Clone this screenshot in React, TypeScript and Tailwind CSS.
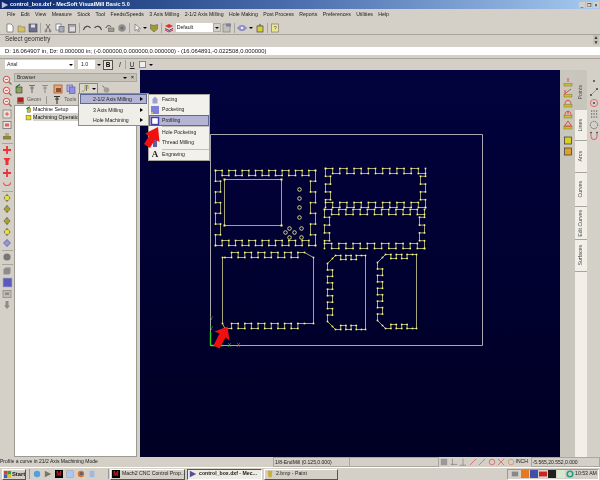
import React from 'react'

type Pt = [number, number]

// walk one side of a panel as a square wave, alternating between the edge and the inset line
function side(a: Pt, b: Pt, n: number, depth: number, inset: Pt): Pt[] {
    const out: Pt[] = []
    for (let i = 0; i < n; i++) {
        const off = i % 2 === 1 ? depth : 0
        const t0 = i / n
        const t1 = (i + 1) / n
        out.push([a[0] + (b[0] - a[0]) * t0 + inset[0] * off, a[1] + (b[1] - a[1]) * t0 + inset[1] * off])
        out.push([a[0] + (b[0] - a[0]) * t1 + inset[0] * off, a[1] + (b[1] - a[1]) * t1 + inset[1] * off])
    }
    return out
}

function panel(x1: number, y1: number, x2: number, y2: number, nx: number, ny: number, depth = 5): Pt[] {
    return [
        ...side([x1, y1], [x2, y1], nx, depth, [0, 1]),
        ...side([x2, y1], [x2, y2], ny, depth, [-1, 0]),
        ...side([x2, y2], [x1, y2], nx, depth, [0, -1]),
        ...side([x1, y2], [x1, y1], ny, depth, [1, 0]),
    ]
}

// panels with straight sides and teeth only along part of the top and bottom
function toothed(x1: number, y1: number, x2: number, y2: number, tx1: number, tx2: number, n: number): Pt[] {
    return [
        [x1, y1],
        ...side([tx1, y1], [tx2, y1], n, -5, [0, 1]),
        [x2, y1],
        [x2, y2],
        ...side([tx2, y2], [tx1, y2], n, -5, [0, -1]),
        [x1, y2],
    ]
}

function sideTeeth(x1: number, y1: number, x2: number, y2: number, n: number): Pt[] {
    return [
        [x2, y1],
        [x2, y2],
        ...side([x2 - 4, y2], [x1 + 8, y2], 5, 4, [0, -1]),
        [x1 + 5, y2 - 3],
        ...side([x1, y2 - 8], [x1, y1 + 8], n, 5, [1, 0]),
        [x1 + 5, y1 + 3],
        ...side([x1 + 8, y1], [x2 - 4, y1], 5, 4, [0, 1]),
    ]
}

const Outline: React.FC<{ pts: Pt[] }> = ({ pts }) => (
    <g>
        <polygon points={pts.map((p) => p.join(',')).join(' ')} fill="none" stroke="#a6a678" strokeWidth="1" />
        {pts.map((p, i) => (
            <rect key={i} x={p[0] - 0.8} y={p[1] - 0.8} width="1.6" height="1.6" fill="#ffff70" />
        ))}
    </g>
)

const Drawing = () => (
    <svg width="420" height="387" viewBox="139.5 69.5 420 387" className="block">
        <polyline points="210,134 482,134 482,345 210,345 210,134" fill="none" stroke="#a8a8b0" strokeWidth="1" />
        <Outline pts={panel(215, 170, 315, 245, 15, 7)} />
        <rect x="224" y="179" width="57" height="46" fill="none" stroke="#a6a678" strokeWidth="1" />
        {[[224, 179], [281, 179], [224, 225], [281, 225]].map((p, i) => (
            <rect key={i} x={p[0] - 1} y={p[1] - 1} width="2" height="2" fill="#ffff70" />
        ))}
        {[[299, 189], [299, 198], [299, 207], [299, 217], [301, 228], [301, 237], [289, 228], [285, 232], [294, 232], [289, 237]].map((p, i) => (
            <circle key={i} cx={p[0]} cy={p[1]} r="1.8" fill="none" stroke="#e8e890" strokeWidth="0.9" />
        ))}
        <Outline pts={panel(325, 168, 425, 207, 14, 5)} />
        <Outline pts={panel(324, 209, 424, 248, 14, 5)} />
        <Outline pts={toothed(222, 257, 313, 323, 224.4, 304, 12)} />
        <Outline pts={sideTeeth(327, 255, 365, 329, 9)} />
        <Outline pts={sideTeeth(377, 254, 416, 328, 9)} />
        <line x1="210" y1="331" x2="210" y2="345" stroke="#30d020" strokeWidth="1.4" />
        <line x1="210" y1="345" x2="223" y2="345" stroke="#60e020" strokeWidth="1.4" />
        <text x="209" y="329" fontSize="6" fontFamily="Liberation Sans" fill="#30b020">Y</text>
        <text x="209" y="319" fontSize="6" fontFamily="Liberation Sans" fill="#807820">Y</text>
        <text x="227" y="346" fontSize="6" fontFamily="Liberation Sans" fill="#30b020">X</text>
        <text x="236" y="346" fontSize="6" fontFamily="Liberation Sans" fill="#807820">X</text>
        <polygon points="227,326 229,340 225,337 219,348 213,345 219,333 214,331" fill="#f01010" />
    </svg>
)

const Ic: React.FC<{ children: React.ReactNode; s?: number }> = ({ children, s = 10 }) => (
    <svg width={s} height={s} viewBox="0 0 10 10" className="block shrink-0">
        {children}
    </svg>
)

const Sep = () => <div className="w-px h-[10px] bg-[#a8a59c] shrink-0 mx-[0.5px]" />
const HSep = () => <div className="h-px w-[11px] bg-[#a8a59c] my-[0.85px] mx-auto" />
const Down = () => <div className="w-0 h-0 border-x-[2px] border-x-transparent border-t-[2.5px] border-t-black shrink-0" />

const Slot: React.FC<{ children: React.ReactNode }> = ({ children }) => (
    <div className="h-[11.3px] flex items-center justify-center shrink-0">{children}</div>
)

const Mag = ({ c = '#e03030' }: { c?: string }) => (
    <Ic>
        <circle cx="4.5" cy="4.5" r="3.2" fill="#f0e8e0" stroke={c} strokeWidth="0.9" />
        <line x1="7" y1="7" x2="9.5" y2="9.5" stroke="#707070" strokeWidth="1.2" />
        <line x1="3" y1="4.5" x2="6" y2="4.5" stroke={c} strokeWidth="0.7" />
    </Ic>
)
const Bead = ({ c }: { c: string }) => (
    <Ic>
        <polygon points="5,0.8 8.5,5 5,9.2 1.5,5" fill="#77775c" />
        <circle cx="5" cy="5" r="2.3" fill={c} />
    </Ic>
)
const RedCross = () => (
    <Ic>
        <path d="M5 1v8M1 5h8" stroke="#f03038" strokeWidth="1.8" />
    </Ic>
)

const LeftColumn = () => (
    <div className="w-[14px] shrink-0 pt-[4px] flex flex-col">
        <Slot><Mag /></Slot>
        <Slot><Mag /></Slot>
        <Slot><Mag /></Slot>
        <Slot>
            <Ic><rect x="1" y="1" width="8" height="8" fill="#ece4dc" stroke="#808080" strokeWidth="0.8" /><path d="M5 3v4M3 5h4" stroke="#e03030" strokeWidth="0.8" /></Ic>
        </Slot>
        <Slot>
            <Ic><rect x="1" y="1.5" width="8" height="7" fill="#ece4dc" stroke="#707070" strokeWidth="0.8" /><rect x="3" y="3.5" width="4" height="3" fill="#e06060" /></Ic>
        </Slot>
        <Slot>
            <Ic><rect x="1" y="5" width="8" height="3.5" fill="#8a8440" /><rect x="3" y="2" width="4" height="3" fill="#b0aa80" /></Ic>
        </Slot>
        <HSep />
        <Slot><RedCross /></Slot>
        <Slot>
            <Ic><path d="M1.5 2h7l-2 3v4h-3V5z" fill="#f03038" /></Ic>
        </Slot>
        <Slot><RedCross /></Slot>
        <Slot>
            <Ic><path d="M1.5 3.5c0 4 7 4 7 0" fill="none" stroke="#f05050" strokeWidth="1.2" /></Ic>
        </Slot>
        <HSep />
        <Slot><Bead c="#e8e030" /></Slot>
        <Slot><Bead c="#a8a030" /></Slot>
        <Slot><Bead c="#a8a030" /></Slot>
        <Slot><Bead c="#e8e030" /></Slot>
        <Slot>
            <Ic><polygon points="5,0.8 9,5 5,9.2 1,5" fill="#8080d0" /><circle cx="5" cy="5" r="1.8" fill="#a0a0a8" /></Ic>
        </Slot>
        <HSep />
        <Slot>
            <Ic><circle cx="5" cy="5" r="3.6" fill="#777" /></Ic>
        </Slot>
        <HSep />
        <Slot>
            <Ic><path d="M1.5 3.5L3.5 1.5H8.5V7L7 8.5H1.5z" fill="#8c8c88" /></Ic>
        </Slot>
        <Slot>
            <Ic s={11}><rect x="1" y="1" width="8" height="8" fill="#5a5ab8" stroke="#9090c8" strokeWidth="0.5" /></Ic>
        </Slot>
        <Slot>
            <Ic><rect x="1" y="1.5" width="8" height="7" fill="#c0bdb4" stroke="#8c8c88" strokeWidth="0.8" /><rect x="3" y="3.5" width="4" height="2.5" fill="#8c8c88" /></Ic>
        </Slot>
        <Slot>
            <Ic><path d="M3.5 1h3v4.5H8L5 9 2 5.5h1.5z" fill="#8c8c88" /></Ic>
        </Slot>
    </div>
)

const Tool = ({ c = '#707070' }: { c?: string }) => (
    <Ic>
        <path d="M2 1.5h6M3 4h4M5 1.5V9" stroke={c} strokeWidth="1.1" fill="none" />
    </Ic>
)

const Browser = () => (
    <div className="w-[123px] shrink-0 flex flex-col pt-[3px]">
        <div className="h-[7px] bg-[#c6c3ba] text-[5px] leading-[7px] pl-[2px] flex justify-between pr-[2px] text-[#222] border border-[#aaa79e] box-content">
            <span>Browser</span>
            <span className="flex gap-[4px] items-center">
                <Down />
                <span className="font-bold leading-none">×</span>
            </span>
        </div>
        <div className="h-[13px] flex items-center gap-[3px]">
            <Ic>
                <rect x="2" y="3" width="6" height="6" fill="#90a060" stroke="#333" strokeWidth="0.6" />
                <path d="M2 3L6 0.5" stroke="#108020" strokeWidth="1.4" />
            </Ic>
            <Tool />
            <Tool c="#909090" />
            <Ic><rect x="1" y="1" width="8" height="8" fill="#d8b070" stroke="#b04030" strokeWidth="0.7" /><rect x="3" y="4" width="5" height="4" fill="#905030" /></Ic>
            <Ic><rect x="1" y="1" width="5.5" height="6.5" fill="#b0b0e8" stroke="#6060b0" strokeWidth="0.7" /><rect x="3.5" y="3" width="5.5" height="6.5" fill="#9090e0" stroke="#6060b0" strokeWidth="0.7" /></Ic>
            <div className="w-[19px] h-[12px] bg-[#dad7cf] border border-[#888] border-b-0 flex items-center gap-[1px] px-[1px] shrink-0">
                <Ic>
                    <path d="M0.5 7c2 1 3.5 0 3.5-2V1.5h3V5" fill="none" stroke="#a0a020" strokeWidth="0.9" />
                    <path d="M5.5 1v6" stroke="#777" strokeWidth="1" />
                </Ic>
                <Down />
            </div>
            <Ic><path d="M1.5 1.5l2 2.5" stroke="#777" strokeWidth="1" /><circle cx="5.5" cy="6" r="2.8" fill="#a0a09a" /></Ic>
        </div>
        <div className="h-[10px] flex items-center text-[5.2px] text-[#555] pl-[2px] gap-[2px]">
            <Ic s={9}><rect x="1.5" y="1.5" width="7" height="7" fill="#b02020" /><rect x="1.5" y="6.5" width="7" height="2" fill="#a08060" /></Ic>
            <span>Geom</span>
            <div className="w-px h-[8px] bg-[#999] mx-[3px]" />
            <Tool c="#333" />
            <span>Tools</span>
            <div className="ml-[3px]">
                <Ic><rect x="1" y="3" width="8" height="6" fill="#d0c030" stroke="#665" strokeWidth="0.6" /></Ic>
            </div>
        </div>
        <div className="flex-1 min-h-0 bg-white border border-[#9d9a90] relative pl-[10px] text-[5.3px] leading-[8px] text-[#111]">
            <div className="flex items-center gap-[1px] h-[8px] -mt-[1px]">
                <Ic s={7}><rect x="3" y="3" width="5" height="6" fill="#c8c030" stroke="#443" strokeWidth="0.5" /><path d="M2 4L7 1" stroke="#108020" strokeWidth="1.6" /></Ic>
                <span>Machine Setup</span>
            </div>
            <div className="flex items-center gap-[1px] h-[8px]">
                <Ic s={7}><rect x="1.5" y="2" width="7" height="6.5" fill="#e4dc20" stroke="#443" strokeWidth="0.6" /></Ic>
                <span className="bg-[#d6d4cc] whitespace-nowrap">Machining Operations</span>
            </div>
        </div>
    </div>
)

const Row: React.FC<{ active?: boolean; arrow?: boolean; children: React.ReactNode }> = ({ active, arrow, children }) => (
    <div className={active ? 'h-[10px] mx-px flex items-center justify-between bg-[#b4b4d4] border border-[#5f6a94] pl-[12px] pr-[3px]' : 'h-[10px] mx-px flex items-center justify-between border border-transparent pl-[12px] pr-[3px]'}>
        <span className="whitespace-nowrap">{children}</span>
        {arrow && <div className="w-0 h-0 border-y-[2.5px] border-y-transparent border-l-[3px] border-l-black" />}
    </div>
)

const Fly: React.FC<{ label: string; active?: boolean; h: string; icon: React.ReactNode }> = ({ label, active, h, icon }) => (
    <div className={`${h} flex items-center ${active ? 'bg-[#b4b4d4] border border-[#5f6a94]' : 'border border-transparent'}`}>
        <div className="w-[10px] flex justify-center">{icon}</div>
        <span className="ml-[2px] whitespace-nowrap">{label}</span>
    </div>
)

const Menus = () => (
    <>
        <div className="absolute left-[78px] top-[23px] w-[71px] h-[33px] bg-[#efeee9] border border-[#8e8c84] text-[5.2px] leading-[8px] text-[#222] flex flex-col gap-[0.5px]">
            <Row active arrow>2-1/2 Axis Milling</Row>
            <Row arrow>3 Axis Milling</Row>
            <Row arrow>Hole Machining</Row>
        </div>
        <div className="absolute left-[148px] top-[24px] w-[62px] h-[67px] bg-[#f2f1ec] border border-[#a8a59c] text-[5.1px] text-[#222] flex flex-col">
            <Fly label="Facing" h="h-[10px]" icon={<Ic><path d="M2.5 8.5V4L5 1.5 7.5 4v4.5z" fill="#a0a0d0" /></Ic>} />
            <Fly label="Pocketing" h="h-[10px]" icon={<Ic><rect x="1" y="1" width="8" height="8" fill="#8080d8" /><circle cx="2" cy="8" r="1" fill="#e8d020" /></Ic>} />
            <Fly label="Profiling" active h="h-[11px]" icon={<Ic><rect x="1.5" y="1.5" width="7" height="7" fill="#fff" stroke="#4040b0" strokeWidth="1.4" /></Ic>} />
            <div className="h-px bg-[#c4c1b8] ml-[13px]" />
            <Fly label="Hole Pocketing" h="h-[11px]" icon={<Ic><path d="M5 2v6" stroke="#888" /></Ic>} />
            <Fly label="Thread Milling" h="h-[10px]" icon={<Ic><path d="M3 1h4v8H3z" fill="#6060a0" /></Ic>} />
            <div className="h-px bg-[#c4c1b8] ml-[13px] mt-[1px]" />
            <Fly label="Engraving" h="h-[10px]" icon={<span className="font-bold font-['Liberation_Serif',serif] text-[9px] text-[#222]">A</span>} />
        </div>
        <svg width="24" height="28" viewBox="0 0 24 28" className="absolute left-[140px] top-[55px]">
            <polygon points="18,2 19.5,17 15,14.5 10,23 4,19 9,11 5,8.5" fill="#f01010" />
        </svg>
    </>
)

const tabs: [string, string][] = [
    ['Lines', 'h-[31px]'],
    ['Arcs', 'h-[32px]'],
    ['Curves', 'h-[34px]'],
    ['Edit Curves', 'h-[33px]'],
    ['Surfaces', 'h-[32px]'],
]

const VText: React.FC<{ children: React.ReactNode }> = ({ children }) => (
    <span className="[writing-mode:vertical-rl] rotate-180 text-[5.2px] leading-none whitespace-nowrap text-[#444]">{children}</span>
)

const PencilIcon = ({ c }: { c: string }) => (
    <Ic>
        <rect x="1" y="6.5" width="8" height="2.5" fill="#c8c030" stroke="#807820" strokeWidth="0.5" />
        <path d={c} stroke="#e83838" strokeWidth="0.9" fill="none" />
    </Ic>
)

const RightPanels = () => (
    <div className="w-[40px] shrink-0 flex">
        <div className="w-[15px] flex flex-col items-center pt-[7px] bg-[#c9c6bd] gap-[0.7px]">
            <PencilIcon c="M5 1v4" />
            <PencilIcon c="M1.5 6L8 1M2 2v4" />
            <PencilIcon c="M2 6c0-5 6-5 6 0" />
            <PencilIcon c="M2 6c0-5 6-5 6 0M5 2.5v3" />
            <PencilIcon c="M5 1L1.5 6h7z" />
            <div className="h-[4px]" />
            <Ic><rect x="1.5" y="2" width="7" height="7" fill="#d8d020" stroke="#333" strokeWidth="0.7" /></Ic>
            <Ic><rect x="1.5" y="2" width="7" height="7" fill="#e0a030" stroke="#333" strokeWidth="0.7" /></Ic>
        </div>
        <div className="w-[12px] flex flex-col bg-[#f1efe7]">
            <div className="h-[40px] pt-[5px] bg-[#c8c5bc] flex items-center justify-center">
                <VText>Points</VText>
            </div>
            {tabs.map(([label, h]) => (
                <div key={label} className={`${h} border-b border-[#a8a59c] flex items-center justify-center`}>
                    <VText>{label}</VText>
                </div>
            ))}
        </div>
        <div className="w-[13px] flex flex-col items-center pt-[6px] gap-[1px]">
            <Ic><circle cx="5" cy="5" r="0.9" fill="#333" /></Ic>
            <Ic><path d="M1.5 8.5L8.5 1.5" stroke="#e86060" strokeWidth="0.8" /><circle cx="2" cy="8" r="0.9" fill="#333" /><circle cx="8" cy="2" r="0.9" fill="#333" /></Ic>
            <Ic><circle cx="5" cy="5" r="3.6" fill="none" stroke="#e06060" strokeWidth="0.9" /><circle cx="5" cy="5" r="0.9" fill="#333" /></Ic>
            <Ic><path d="M2 2h1.2M4.5 2h1.2M7 2h1.2M2 5h1.2M4.5 5h1.2M7 5h1.2M2 8h1.2M4.5 8h1.2M7 8h1.2" stroke="#444" strokeWidth="1.2" /></Ic>
            <Ic><circle cx="5" cy="5" r="3.7" fill="none" stroke="#666" strokeWidth="1" strokeDasharray="1.2 0.8" /></Ic>
            <Ic><path d="M2 1.5v4a3 3 0 0 0 6 0v-4" fill="none" stroke="#d06060" strokeWidth="1" /><circle cx="2" cy="1.5" r="0.8" fill="#333" /><circle cx="8" cy="1.5" r="0.8" fill="#333" /></Ic>
        </div>
    </div>
)

const menu = ['File', 'Edit', 'View', 'Measure', 'Stock', 'Tool', 'Feeds/Speeds', '3 Axis Milling', '2-1/2 Axis Milling', 'Hole Making', 'Post Process', 'Reports', 'Preferences', 'Utilities', 'Help']

const Doc = () => <Ic><path d="M2 1h4l2 2v6H2z" fill="#fff" stroke="#666" strokeWidth="0.7" /></Ic>

const MainToolbar = () => (
    <div className="h-[13px] flex items-center pl-[5px] gap-[1.6px] border-b border-[#a6a39a] box-content">
        <Doc />
        <Ic><path d="M1 3h3l1 1h3v5H1z" fill="#d8c060" stroke="#777" strokeWidth="0.6" /></Ic>
        <Ic><rect x="1" y="1" width="8" height="8" fill="#706e90" stroke="#444" strokeWidth="0.6" /><rect x="3" y="1.5" width="4" height="3" fill="#dde" /></Ic>
        <Sep />
        <Ic><path d="M3 1l4 6M7 1L3 7" stroke="#555" strokeWidth="0.8" /><circle cx="3" cy="8" r="1" fill="none" stroke="#555" strokeWidth="0.7" /><circle cx="7" cy="8" r="1" fill="none" stroke="#555" strokeWidth="0.7" /></Ic>
        <Ic><rect x="1" y="1" width="5" height="6" fill="#fff" stroke="#667" strokeWidth="0.7" /><rect x="4" y="3.5" width="5" height="5.5" fill="#aab" stroke="#667" strokeWidth="0.7" /></Ic>
        <Ic><rect x="1.5" y="1.5" width="7" height="8" fill="#a8a8a8" stroke="#666" strokeWidth="0.7" /><rect x="3" y="4" width="5" height="4" fill="#ddd" /></Ic>
        <Sep />
        <Ic><path d="M1.5 7c1-4 5-5 7-2" fill="none" stroke="#444" strokeWidth="1.1" /></Ic>
        <Ic><path d="M8.5 7c-1-4-5-5-7-2" fill="none" stroke="#444" strokeWidth="1.1" /></Ic>
        <Ic><path d="M1 5c1-3 4-3 5-1" fill="none" stroke="#444" strokeWidth="1" /><rect x="3.5" y="5" width="5.5" height="3.5" fill="#a09c90" stroke="#555" strokeWidth="0.5" /></Ic>
        <Ic><circle cx="5" cy="5" r="3.8" fill="#8f8f8f" /><circle cx="5" cy="5" r="1.6" fill="#6c6c6c" /></Ic>
        <Sep />
        <Ic><path d="M3 1v7l2-1.5 1.5 2.5 1-.6L6 6l2.5-.4z" fill="#eee" stroke="#666" strokeWidth="0.6" /></Ic>
        <Down />
        <Ic><path d="M1.5 1.5l3.5 1 3.5-1V6L5 9 1.5 6z" fill="#a09a30" stroke="#555" strokeWidth="0.5" /></Ic>
        <Sep />
        <Ic><path d="M1 3l4-2 4 2-4 2z" fill="#e03030" /><path d="M1 5.5l4 2 4-2" stroke="#4040a0" fill="none" /><path d="M1 7l4 2 4-2" stroke="#e03030" fill="none" /></Ic>
        <div className="w-[45px] h-[9px] bg-white flex items-center justify-between text-[5.2px] pl-[1px] text-[#222] shrink-0">
            <span>Default</span>
            <div className="w-[8px] h-[9px] bg-[#d4d0c8] flex items-center justify-center border border-[#b0ada4]"><Down /></div>
        </div>
        <Ic><rect x="1" y="1" width="7" height="8" fill="#c0c0b8" stroke="#777" strokeWidth="0.6" /><rect x="4" y="0.5" width="5" height="3" fill="#8080a0" /></Ic>
        <Sep />
        <Ic><path d="M0.5 5C3 1.5 7 1.5 9.5 5 7 8.5 3 8.5 0.5 5z" fill="#9090d8" stroke="#6060a0" strokeWidth="0.5" /><circle cx="5" cy="5" r="1.3" fill="#eee" /></Ic>
        <Down />
        <Ic><rect x="2" y="3" width="6" height="6" fill="#d8d030" stroke="#445" strokeWidth="0.7" /><path d="M3 3l2-2.5L7 3" fill="#6070c0" /></Ic>
        <Sep />
        <Ic><rect x="1.5" y="1" width="7" height="8" fill="#f0e890" stroke="#887" strokeWidth="0.8" /><text x="3.4" y="7" fontSize="6" fill="#555" fontFamily="Liberation Sans">?</text></Ic>
    </div>
)

const FormatToolbar = () => (
    <div className="h-[12px] flex items-center pl-[5px] text-[5.2px] text-[#222] mt-[3px] border-t border-[#a6a39a]">
        <div className="w-[69px] h-[9px] bg-white flex items-center justify-between pl-[2px]">
            <span>Arial</span>
            <div className="w-[7px] flex justify-center"><Down /></div>
        </div>
        <div className="w-[24px] h-[9px] bg-white flex items-center justify-between pl-[3px] ml-[4px]">
            <span>1.0</span>
            <div className="w-[7px] h-[9px] bg-[#d4d0c8] flex items-center justify-center"><Down /></div>
        </div>
        <div className="w-[10px] h-[10px] ml-[1px] bg-[#e6e3dc] border border-[#55534d] flex items-center justify-center font-bold text-[6.5px] text-black">B</div>
        <span className="italic ml-[6px] text-[6.5px] text-[#222]">I</span>
        <div className="w-px h-[9px] bg-[#a8a59c] mx-[4px]" />
        <span className="underline text-[6.5px]">U</span>
        <div className="w-[7px] h-[7px] ml-[4px] border border-[#888] bg-[#eee]" />
        <div className="ml-[3px]"><Down /></div>
    </div>
)

const Start = () => (
    <div className="w-[24px] h-[11px] ml-[2px] border border-[#555] border-t-white border-l-white flex items-center gap-px pl-px font-bold text-[5.8px] text-[#111] shrink-0">
        <Ic s={7}><rect x="0" y="0" width="5" height="5" fill="#e04020" /><rect x="5" y="0" width="5" height="5" fill="#30a030" /><rect x="0" y="5" width="5" height="5" fill="#3060d0" /><rect x="5" y="5" width="5" height="5" fill="#e8c020" /></Ic>
        Start
    </div>
)

const Task: React.FC<{ w: string; bold?: boolean; icon: React.ReactNode; label: string }> = ({ w, bold, icon, label }) => (
    <div className={`${w} h-[11px] shrink-0 flex items-center gap-[2px] pl-[1px] whitespace-nowrap border ${bold ? 'bg-[#eeebe4] font-bold border-[#555] border-r-white border-b-white' : 'border-[#555] border-t-white border-l-white'}`}>
        {icon}
        <span>{label}</span>
    </div>
)

const Mach = () => (
    <Ic s={8}><rect width="10" height="10" fill="#000" /><text x="1.5" y="8" fontSize="8" fontWeight="bold" fill="#e02020" fontFamily="Liberation Sans">M</text></Ic>
)

const Taskbar = () => (
    <div className="h-[13px] shrink-0 flex items-center border-t border-white text-[5.2px] text-[#222]">
        <Start />
        <div className="w-px h-[10px] bg-[#999] ml-[3px] mr-[3px]" />
        <div className="flex gap-[3px] items-center">
            <Ic s={8}><circle cx="5" cy="5" r="4" fill="#50a0e0" /></Ic>
            <Ic s={8}><path d="M1 1l8 4-8 4z" fill="#776" /></Ic>
            <Mach />
            <Ic s={8}><rect x="1" y="1" width="8" height="8" fill="#a8c8f0" stroke="#88a" strokeWidth="0.5" /></Ic>
            <Ic s={8}><circle cx="5" cy="5" r="4" fill="#e07020" /><circle cx="5.5" cy="4.5" r="2" fill="#4060a0" /></Ic>
            <Ic s={8}><rect x="2" y="1" width="6" height="8" fill="#a0b8e0" /></Ic>
        </div>
        <div className="w-px h-[10px] bg-[#999] ml-[12px] mr-[1px]" />
        <div className="flex gap-[2px]">
            <Task w="w-[75px]" label="Mach2 CNC Control Prop..." icon={<Mach />} />
            <Task w="w-[75px]" bold label="control_box.dxf - Mec..." icon={<Ic s={8}><path d="M1 1l8 4-8 4z" fill="#5050a0" /></Ic>} />
            <Task w="w-[74px]" label="2.bmp - Paint" icon={<Ic s={8}><path d="M2 1l6 0-1 8H3z" fill="#c8b040" /></Ic>} />
        </div>
        <div className="ml-auto w-[92px] h-[11px] mr-[1px] border border-[#999] border-r-white border-b-white flex items-center gap-[1px] pl-[3px] pr-[3px] shrink-0">
            <Ic s={8}><rect x="1" y="2" width="8" height="6" fill="#888" /></Ic>
            <div className="w-[2px]" />
            <Ic s={8}><rect width="10" height="10" fill="#e87820" /></Ic>
            <Ic s={8}><rect width="10" height="10" fill="#4050a8" /></Ic>
            <Ic s={8}><rect y="2" width="10" height="6" fill="#d02020" /></Ic>
            <Ic s={8}><rect width="10" height="10" fill="#202020" /></Ic>
            <Ic s={8}><rect width="10" height="10" fill="#d8e8d0" /></Ic>
            <Ic s={8}><circle cx="5" cy="5" r="3.5" fill="none" stroke="#20a080" strokeWidth="2" /></Ic>
            <span className="ml-auto whitespace-nowrap">10:53 AM</span>
        </div>
    </div>
)

const StatusBar = () => (
    <div className="h-[10px] shrink-0 flex items-center text-[5.05px] text-[#222]">
        <span className="w-[273px] shrink-0 whitespace-nowrap">Profile a curve in 21/2 Axis Machining Mode</span>
        <span className="w-[76px] h-[10px] shrink-0 border border-[#aaa79e] border-r-0 pl-[1px] whitespace-nowrap leading-[8px]">1/8-EndMill (0.125,0.000)</span>
        <span className="w-[90px] h-[10px] shrink-0 border border-[#aaa79e]" />
        <div className="flex items-center gap-[1.5px] ml-[1px] shrink-0">
            <Ic s={8}><rect x="1" y="1" width="8" height="8" fill="#999" /></Ic>
            <Ic s={8}><path d="M3 1v8M1 8h8" stroke="#888" /></Ic>
            <Ic s={8}><path d="M5 1v8M1 9h8" stroke="#888" /></Ic>
            <Ic s={8}><path d="M1 9L9 1" stroke="#d86060" /></Ic>
            <Ic s={8}><path d="M1 9L9 1" stroke="#d86060" /></Ic>
            <Ic s={8}><circle cx="5" cy="5" r="3.5" fill="none" stroke="#d86060" /></Ic>
            <Ic s={8}><path d="M1 1l8 8M9 1L1 9" stroke="#d86060" /></Ic>
            <Ic s={8}><circle cx="5" cy="5" r="3.5" fill="none" stroke="#d89060" /></Ic>
        </div>
        <span className="ml-[1px] w-[14px] shrink-0">INCH</span>
        <span className="ml-[1px] h-[10px] border border-[#aaa79e] flex-1 whitespace-nowrap pl-[1px] leading-[8px]">-5.565,20.552,0.000</span>
    </div>
)

export default function App() {
    return (
        <div className="w-[600px] h-[480px] overflow-hidden flex flex-col bg-[#d4d0c8] font-['Liberation_Sans',sans-serif] blur-[0.4px]">
            <div className="h-[9px] shrink-0 bg-linear-to-r from-[#0d2a6e] via-[#4c70ae] to-[#a6caf0] flex items-center pl-[1px] gap-[1px]">
                <Ic s={8}><path d="M1 1l8 4-8 4z" fill="#c0c0d8" /></Ic>
                <span className="font-bold text-[5.5px] text-white leading-none">control_box.dxf - MecSoft VisualMill Basic 5.0</span>
                <div className="ml-auto flex gap-px pr-[1px]">
                    {['_', '❐', '×'].map((g) => (
                        <div key={g} className="w-[6px] h-[6px] bg-[#d4d0c8] text-[5px] leading-[6px] text-center text-black">{g}</div>
                    ))}
                </div>
            </div>
            <div className="h-[12px] shrink-0 flex items-center pl-[7px] gap-[5.4px] text-[5.2px] text-[#222] whitespace-nowrap">
                {menu.map((m) => (
                    <span key={m}>{m}</span>
                ))}
            </div>
            <MainToolbar />
            <div className="h-[12px] shrink-0 flex items-start pl-[5px] text-[6.3px] leading-[8px] text-[#333] justify-between pr-[1px]">
                <span>Select geometry</span>
                <div className="w-[6px] flex flex-col text-[5px] leading-[5px] text-center bg-[#c4c1b8]">
                    <span>▲</span>
                    <span>▼</span>
                </div>
            </div>
            <div className="h-[8px] shrink-0 bg-white flex items-center pl-[5px] text-[5.85px] text-[#111] whitespace-nowrap">
                D: 16.064907 in, Dz: 0.000000 in; (-0.000000,0.000000,0.000000) - (16.064891,-0.022508,0.000000)
            </div>
            <FormatToolbar />
            <div className="flex-1 min-h-0 flex relative">
                <LeftColumn />
                <Browser />
                <div className="w-[3px] shrink-0" />
                <div className="w-[420px] shrink-0 bg-linear-to-b from-[#02023e] to-[#000024]">
                    <Drawing />
                </div>
                <RightPanels />
                <Menus />
            </div>
            <StatusBar />
            <Taskbar />
        </div>
    )
}
